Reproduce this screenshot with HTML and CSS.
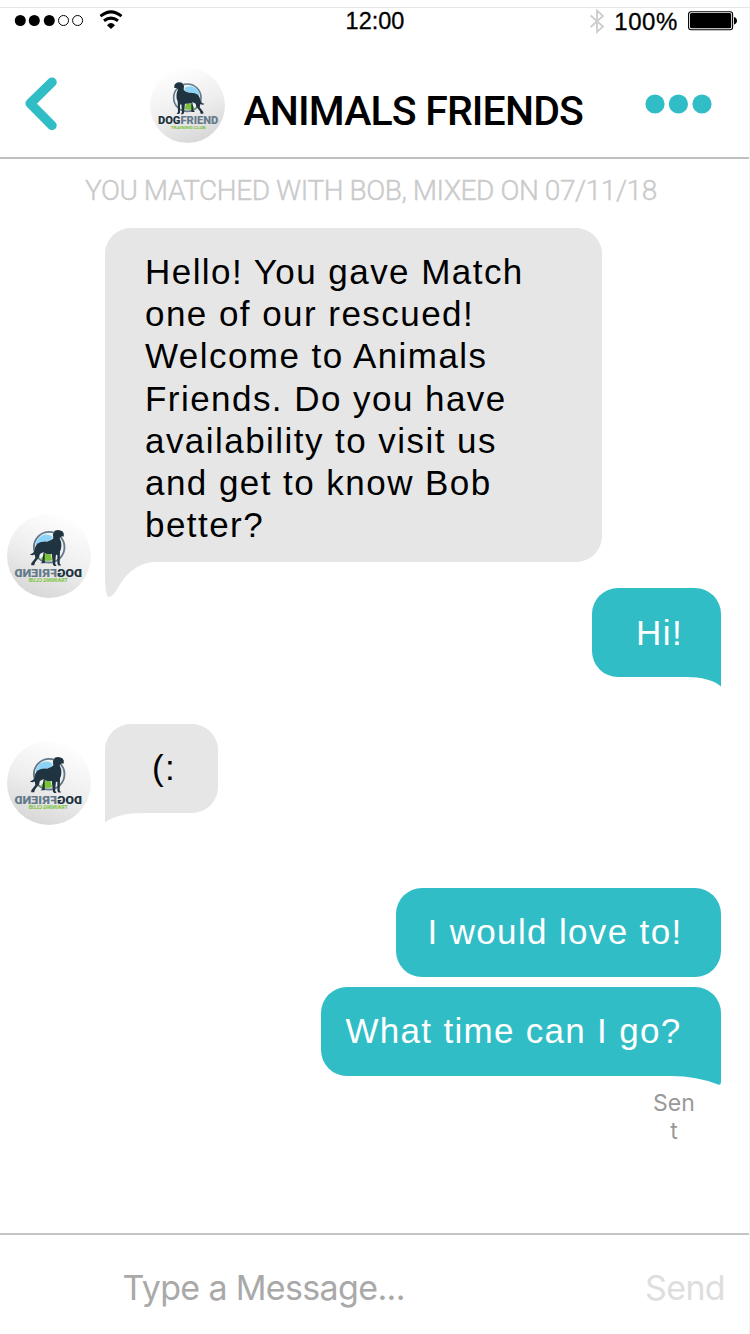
FILE: index.html
```html
<!DOCTYPE html>
<html lang="en">
<head>
<meta charset="utf-8">
<title>Animals Friends</title>
<link rel="stylesheet" href="styles.css">
</head>
<body>
<svg class="defs" width="0" height="0">
  <defs>
    <linearGradient id="disc" x1="0.3" y1="0" x2="0.7" y2="1">
      <stop offset="0" stop-color="#fff"/>
      <stop offset="0.5" stop-color="#efefef"/>
      <stop offset="1" stop-color="#d6d6d6"/>
    </linearGradient>
    <symbol id="logo" viewBox="0 0 225 225">
      <circle cx="112.500" cy="112.500" r="112.500" fill="url(#disc)"/>
      <circle cx="112" cy="89" r="41" fill="#eef1f2" stroke="#64798a" stroke-width="5"/>
      <path d="M103 60 Q124 48 140 64 Q149 75 149 85 Q140 76 108 72Z" fill="#8dd3f8"/>
      <path d="M104 124 L108 107 L123 106 L136 122 Q120 128 104 124Z" fill="#7cc33c"/>
      <path d="M76 47 Q86 40 97 45 L102 54 L101 65 Q106 72 118 74 Q134 73 144 80 Q150 87 151 97 Q155 108 164 107 Q158 113 151 108 L149 118 L160 132 L160 137 L152 137 L150 130 L139 116 L137 107 L127 102 L131 129 L136 132 L124 132 L124 105 Q114 108 105 107 L102 135 L99 139 L92 139 L96 133 L94 109 L90 110 L90 134 L87 138 L80 138 L84 132 L83 100 Q78 92 80 76 L84 64 L80 60 L73 60 L73 52Z" fill="#203340"/>
      <text class="logo-name" x="24" y="168" textLength="181" lengthAdjust="spacingAndGlyphs"><tspan fill="#203340">DOG</tspan><tspan fill="#64798a">FRIEND</tspan></text>
      <text class="logo-sub" x="62" y="183" textLength="105" lengthAdjust="spacingAndGlyphs">TRAINING CLUB</text>
    </symbol>
  </defs>
</svg>
<div class="screen">
  <div class="status">
    <svg class="signal" width="110" height="24" viewBox="0 0 110 24">
      <g><circle cx="6.300" cy="12.500" r="5.500"/><circle cx="20.300" cy="12.500" r="5.500"/><circle cx="35.300" cy="12.500" r="5.500"/></g>
      <g fill="none" stroke="#000"><circle cx="49.500" cy="12.500" r="5"/><circle cx="63.600" cy="12.500" r="5"/></g>
      <g fill="none" stroke="#000" stroke-width="3"><path d="M86.500 8.200 Q97 -0.500 107.500 8.200"/><path d="M90 12.800 Q97 7.500 104 12.800"/></g>
      <path d="M93 17.200 Q97 12.800 101 17.200 L97 21Z"/>
    </svg>
    <span class="clock">12:00</span>
    <div class="power">
      <svg width="14" height="27" viewBox="0 0 14 27" fill="none" stroke="#ccc" stroke-width="1.800"><path d="M0.700 7.500 L13 18.500 L7 24 V2.500 L13 8 L0.700 19"/></svg>
      <span class="percent">100%</span>
      <svg width="50" height="20" viewBox="0 0 50 20"><rect x="0.600" y="0.700" width="44" height="18" rx="2.500" fill="none" stroke="#000" stroke-width="1.100"/><rect x="2" y="2.100" width="41.200" height="15.200" rx="1.500"/><path d="M46 6 Q49 7 49 9.700 Q49 12.500 46 13.500Z"/></svg>
    </div>
  </div>
  <header class="header">
    <svg class="back" width="34" height="54" viewBox="0 0 34 54"><path d="M27 5.200 L5.200 26.500 L27 48.500" fill="none" stroke="#30bdc6" stroke-width="9.500" stroke-linecap="round" stroke-linejoin="round"/></svg>
    <svg class="club" width="75" height="75"><use href="#logo"/></svg>
    <h1 class="title">ANIMALS FRIENDS</h1>
    <svg class="more" width="68" height="20" fill="#30bdc6"><circle cx="10" cy="10" r="9.600"/><circle cx="33.400" cy="10" r="9.600"/><circle cx="57" cy="10" r="9.600"/></svg>
  </header>
  <main class="chat">
    <p class="matched">YOU MATCHED WITH BOB, MIXED ON 07/11/18</p>
    <div class="row received">
      <svg class="avatar" width="84" height="84"><use href="#logo"/></svg>
      <div class="bubble long">Hello! You gave Match<br>one of our rescued!<br>Welcome to Animals<br>Friends. Do you have<br>availability to visit us<br>and get to know Bob<br>better?
        <svg class="tail" width="60" height="64" viewBox="0 0 60 64"><path d="M0 0 V45 Q0.500 63 4 63 Q8 63 14 52 Q27 29 52 27.500 V0Z"/></svg>
      </div>
    </div>
    <div class="row sent hi">
      <div class="bubble">Hi!
        <svg class="tail" width="60" height="40" viewBox="0 0 60 40"><path d="M60 0 V39.500 Q49 30 25 30 V0Z"/></svg>
      </div>
    </div>
    <div class="row received smile">
      <svg class="avatar" width="84" height="84"><use href="#logo"/></svg>
      <div class="bubble short">(:
        <svg class="tail" width="60" height="40" viewBox="0 0 60 40"><path d="M0 0 V39.500 Q12 30 40 30 V0Z"/></svg>
      </div>
    </div>
    <div class="row sent love"><div class="bubble">I would love to!</div></div>
    <div class="row sent time">
      <div class="bubble">What time can I go?
        <svg class="tail" width="60" height="40" viewBox="0 0 60 40"><path d="M60 0 V36 Q60 39.500 57 38.500 Q36 30 10 30 V0Z"/></svg>
      </div>
    </div>
    <p class="state">Sen<br>t</p>
  </main>
  <footer class="composer">
    <span class="placeholder">Type a Message...</span>
    <span class="send">Send</span>
  </footer>
</div>
</body>
</html>
```
FILE: styles.css
```css
* { box-sizing: border-box; }
body { margin: 0; background: #fff; font-family: "Liberation Sans", Arial, sans-serif; color: #000; }
.defs { position: absolute; }
svg { display: block; flex: none; }
.screen { width: 750px; height: 1334px; display: flex; flex-direction: column; overflow: hidden; border-right: 1px solid #f5f5f5; padding-top: 7px; }
.status { height: 43px; border-top: 1px solid #e6e6e6; display: grid; grid-template-columns: 1fr auto 1fr; align-items: start; padding: 0 11px 0 14px; font-size: 24px; line-height: 27px; white-space: nowrap; }
.clock { font-size: 23.5px; padding-right: 2px; -webkit-text-stroke: 0.3px #000; }
.power { display: flex; justify-content: flex-end; }
.percent { margin: 0 10px 0 10px; letter-spacing: 0.6px; -webkit-text-stroke: 0.3px #000; }
.power svg:last-child { margin-top: 3px; }
.header { height: 109px; border-bottom: 2px solid #c0c0c0; display: flex; align-items: flex-start; padding-left: 24.5px; flex: none; }
.back { margin-top: 27px; }
.club { margin: 18px 0 0 91px; }
.title { margin: 33px 0 0 19px; width: 401.5px; font: 500 41px/56px Roboto, "Open Sans", sans-serif; letter-spacing: -0.85px; white-space: nowrap; }
.more { margin-top: 44px; }
.chat { flex: 1; min-height: 0; }
.matched { margin: 12px 0 0 85px; height: 57px; font: 300 28px/40px Roboto, "Open Sans", sans-serif; letter-spacing: -0.43px; color: #cacaca; -webkit-text-stroke: 0.4px #cacaca; white-space: nowrap; }
.row { display: flex; }
.received { padding-left: 7px; align-items: flex-end; }
.received .avatar { transform: scaleX(-1); margin-right: 14px; }
.bubble { position: relative; isolation: isolate; height: 89px; padding: 23px 38px 0 25px; border-radius: 26px; font-size: 35px; line-height: 42.2px; letter-spacing: 1.45px; white-space: nowrap; }
.received .bubble { background: #e6e6e6; }
.received .long { width: 496.5px; height: 334px; padding: 23px 0 0 40px; margin-bottom: 36px; }
.received .short { width: 112.5px; padding-left: 47px; margin-bottom: 12px; }
.tail { position: absolute; z-index: -1; left: 0; bottom: -36px; fill: #e6e6e6; }
.short .tail { bottom: -10px; }
.sent { justify-content: flex-end; padding-right: 28px; }
.sent .bubble { background: #30bdc6; color: #fff; }
.sent .tail { left: auto; right: 0; bottom: -10px; fill: #30bdc6; }
.hi { margin-top: -10px; }
.hi .bubble { width: 129px; padding-top: 24px; padding-left: 44px; }
.smile { margin-top: 47px; }
.love { margin-top: 63px; }
.love .bubble { width: 325.5px; padding-left: 32px; letter-spacing: 1.35px; }
.time { margin-top: 10px; }
.time .bubble { width: 400.5px; letter-spacing: 1.3px; }
.state { margin: 13px 53px 0 auto; width: 44px; text-align: center; font: 23px/28px Inter, Roboto, sans-serif; color: #999; }
.composer { height: 101px; border-top: 2px solid #c4c4c4; display: flex; align-items: center; justify-content: space-between; padding: 6px 24px 0 122.5px; font-family: Inter, Roboto, sans-serif; font-size: 34px; letter-spacing: -0.65px; flex: none; }
.placeholder { color: #a9a9a9; }
.send { color: #dedede; }
.logo-name { font: 900 31px Roboto, sans-serif; }
.logo-sub { font: 700 13px Roboto, sans-serif; fill: #7cc33c; }
```
